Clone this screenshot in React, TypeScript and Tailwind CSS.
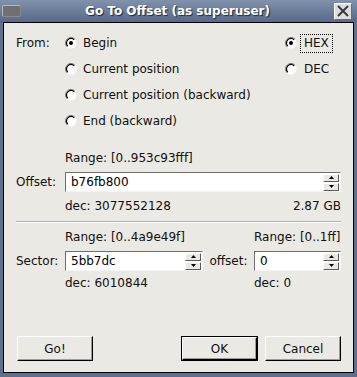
import React from 'react';

const Radio = ({ checked }: { checked?: boolean }) => (
  <svg width="12" height="12" viewBox="0 0 12 12" className="shrink-0">
    <circle cx="6" cy="6" r="5.5" fill="#ffffff" />
    <path d="M9.9 2.1 A5.5 5.5 0 0 0 2.1 9.9" fill="none" stroke="#7a7a7a" strokeWidth="1" />
    <path d="M9.2 2.8 A4.5 4.5 0 0 0 2.8 9.2" fill="none" stroke="#000000" strokeWidth="1.2" />
    {checked && <circle cx="6" cy="6" r="2" fill="#000000" />}
  </svg>
);

const Arrow = ({ up }: { up?: boolean }) => (
  <svg width="5" height="3" viewBox="0 0 5 3">
    <path d={up ? 'M0 3 L2.5 0 L5 3 Z' : 'M0 0 L5 0 L2.5 3 Z'} fill="#000" />
  </svg>
);

const SpinBox = ({ value, width }: { value: string; width: string }) => (
  <div
    className={`${width} h-[20px] flex items-center bg-white border border-t-[#6e6e6e] border-l-[#6e6e6e] border-b-[#f4f4f4] border-r-[#f4f4f4] pl-[5px] pr-[1px]`}
  >
    <span className="flex-1 text-black">{value}</span>
    <div className="flex flex-col gap-[1px]">
      <div className="w-[16px] h-[8px] flex items-center justify-center bg-[#ebe9e4] border-t border-l border-t-white border-l-white border-b border-r border-b-[#5a5a5a] border-r-[#5a5a5a]">
        <Arrow up />
      </div>
      <div className="w-[16px] h-[8px] flex items-center justify-center bg-[#ebe9e4] border-t border-l border-t-white border-l-white border-b border-r border-b-[#5a5a5a] border-r-[#5a5a5a]">
        <Arrow />
      </div>
    </div>
  </div>
);

const Button = ({ label, isDefault }: { label: string; isDefault?: boolean }) => (
  <div className={isDefault ? 'border border-black' : ''}>
    <button
      className={`${isDefault ? 'w-[75px] h-[23px]' : 'w-[76px] h-[25px]'} bg-[#ebe9e4] border border-t-white border-l-white border-b-black border-r-black shadow-[inset_-1px_-1px_0_#9f9d98] text-[#101010]`}
    >
      {label}
    </button>
  </div>
);

const options = ['Begin', 'Current position', 'Current position (backward)', 'End (backward)'];

export default function App() {
  return (
    <div className="w-[357px] h-[377px] flex flex-col bg-[#5e7090] px-[3px] pb-[4px] font-['DejaVu_Sans',sans-serif] text-[12px] text-[#101010]">
      {/* Title bar */}
      <div className="-mx-[3px] h-[22px] flex items-center px-[2px] bg-gradient-to-b from-[#8192ab] to-[#56698a] relative">
        <div className="w-[19px] h-[12px] rounded-[2px] bg-[#707070] border border-t-[#b8b8b8] border-l-[#b8b8b8] border-b-[#8a8a8a] border-r-[#8a8a8a]" />
        <div className="flex-1 text-center font-bold text-white [text-shadow:1px_1px_1px_#1e2838]">
          Go To Offset (as superuser)
        </div>
        <div className="w-[18px] h-[17px] mr-[3px] flex items-center justify-center bg-[#dedede] border border-t-white border-l-white border-b-[#6b6b6b] border-r-[#6b6b6b]">
          <svg width="12" height="12" viewBox="0 0 12 12">
            <path d="M1 1 L11 11 M11 1 L1 11" stroke="#3a3a3a" strokeWidth="2" />
          </svg>
        </div>
      </div>

      {/* Content */}
      <div className="flex-1 flex flex-col border border-black bg-[#ebe9e4] px-[12px] pt-[7px] pb-[11px]">
        {/* From section */}
        <div className="flex">
          <div className="w-[49px] h-[26px] flex items-center">From:</div>
          <div className="flex-1 flex flex-col">
            {options.map((o, i) => (
              <div key={o} className="h-[26px] flex items-center gap-[6px]">
                <Radio checked={i === 0} />
                <span>{o}</span>
              </div>
            ))}
          </div>
          <div className="w-[56px] flex flex-col">
            <div className="h-[26px] flex items-center gap-[3px]">
              <Radio checked />
              <span className="border border-dotted border-black px-[3px] py-[2px] leading-[13px]">HEX</span>
            </div>
            <div className="h-[26px] flex items-center gap-[7px]">
              <Radio />
              <span>DEC</span>
            </div>
          </div>
        </div>

        {/* Offset */}
        <div className="mt-[14px] h-[20px] flex items-center pl-[49px]">Range: [0..953c93fff]</div>
        <div className="mt-[4px] flex items-center">
          <div className="w-[49px]">Offset:</div>
          <SpinBox value="b76fb800" width="flex-1" />
        </div>
        <div className="mt-[4px] h-[20px] flex items-center justify-between pl-[49px]">
          <span>dec: 3077552128</span>
          <span>2.87 GB</span>
        </div>

        <div className="mt-[5px] h-px bg-[#b3b1ac] border-b border-white box-content" />

        {/* Sector */}
        <div className="mt-[4px] h-[20px] flex items-center">
          <div className="w-[49px]" />
          <div className="w-[138px]">Range: [0..4a9e49f]</div>
          <div className="flex-1 pl-[51px]">Range: [0..1ff]</div>
        </div>
        <div className="mt-[4px] flex items-center">
          <div className="w-[49px]">Sector:</div>
          <SpinBox value="5bb7dc" width="w-[138px]" />
          <div className="w-[51px] text-center">offset:</div>
          <SpinBox value="0" width="flex-1" />
        </div>
        <div className="mt-[2px] h-[20px] flex items-center">
          <div className="w-[49px]" />
          <div className="w-[138px]">dec: 6010844</div>
          <div className="flex-1 pl-[51px]">dec: 0</div>
        </div>

        {/* Buttons */}
        <div className="mt-auto flex items-center pl-[1px]">
          <Button label="Go!" />
          <div className="flex-1" />
          <Button label="OK" isDefault />
          <div className="w-[7px]" />
          <Button label="Cancel" />
        </div>
      </div>
    </div>
  );
}
